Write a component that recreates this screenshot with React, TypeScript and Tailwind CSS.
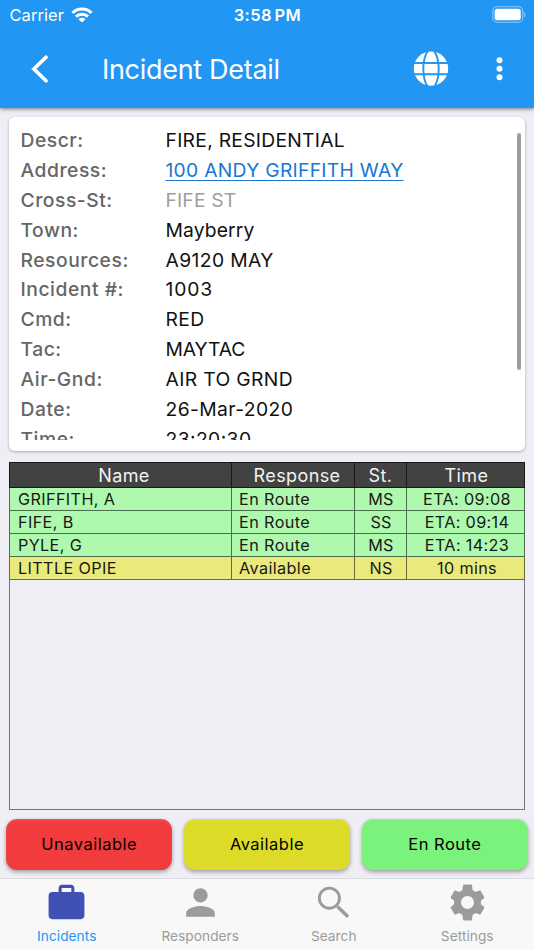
import React from "react";

type Detail = { label: string; value: string; spacing: string; tone?: string };

const details: Detail[] = [
  { label: "Descr:", value: "FIRE, RESIDENTIAL", spacing: "tracking-[0.27px]" },
  { label: "Address:", value: "100 ANDY GRIFFITH WAY", spacing: "tracking-[0.28px]", tone: "link" },
  { label: "Cross-St:", value: "FIFE ST", spacing: "tracking-[0.15px]", tone: "muted" },
  { label: "Town:", value: "Mayberry", spacing: "tracking-[0.12px]" },
  { label: "Resources:", value: "A9120 MAY", spacing: "tracking-[0.38px]" },
  { label: "Incident #:", value: "1003", spacing: "tracking-[0.85px]" },
  { label: "Cmd:", value: "RED", spacing: "tracking-[0.4px]" },
  { label: "Tac:", value: "MAYTAC", spacing: "tracking-[-0.1px]" },
  { label: "Air-Gnd:", value: "AIR TO GRND", spacing: "tracking-[0.35px]" },
  { label: "Date:", value: "26-Mar-2020", spacing: "tracking-[0.4px]" },
  { label: "Time:", value: "23:20:30", spacing: "tracking-[0.4px]" },
];

const rows = [
  ["GRIFFITH, A", "En Route", "MS", "ETA: 09:08"],
  ["FIFE, B", "En Route", "SS", "ETA: 09:14"],
  ["PYLE, G", "En Route", "MS", "ETA: 14:23"],
  ["LITTLE OPIE", "Available", "NS", "10 mins"],
];

const tabs = [
  {
    label: "Incidents",
    icon: (
      <path d="M20 6.2h-3.6V3.9c0-1-.8-1.8-1.8-1.8H9.4c-1 0-1.8.8-1.8 1.8v2.3H4c-1.11 0-2 .89-2 2v11.1c0 1.11.89 2 2 2h16c1.11 0 2-.89 2-2V8.2c0-1.11-.89-2-2-2zm-5.3 0H9.3V3.9h5.4v2.3z" />
    ),
  },
  {
    label: "Responders",
    icon: (
      <path d="M12 12c2.21 0 4-1.79 4-4s-1.79-4-4-4-4 1.79-4 4 1.79 4 4 4zm0 2c-2.67 0-8 1.34-8 4v2h16v-2c0-2.66-5.33-4-8-4z" />
    ),
  },
  {
    label: "Search",
    icon: (
      <g fill="none" stroke="#9b9b9b">
        <circle cx="9.7" cy="9.6" r="5.6" strokeWidth="1.6" />
        <path d="m14.2 14.2 5.9 5.8" strokeWidth="1.9" />
      </g>
    ),
  },
  {
    label: "Settings",
    icon: (
      <path d="M19.43 12.98c.04-.32.07-.64.07-.98s-.03-.66-.07-.98l1.8-1.45c.19-.15.24-.42.12-.64l-1.95-3.4c-.12-.22-.39-.3-.61-.22l-2.22.85c-.52-.4-1.08-.73-1.69-.98l-.38-2.76C14.46 2.18 14.25 2 14 2h-4c-.25 0-.46.18-.49.42l-.38 2.76c-.61.25-1.17.59-1.69.98l-2.22-.85c-.23-.09-.49 0-.61.22l-1.95 3.4c-.13.22-.07.49.12.64l1.8 1.45c-.04.32-.07.65-.07.98s.03.66.07.98l-1.8 1.45c-.19.15-.24.42-.12.64l1.95 3.4c.12.22.39.3.61.22l2.22-.85c.52.4 1.08.73 1.69.98l.38 2.76c.03.24.24.42.49.42h4c.25 0 .46-.18.49-.42l.38-2.76c.61-.25 1.17-.59 1.69-.98l2.22.85c.23.09.49 0 .61-.22l1.95-3.4c.12-.22.07-.49-.12-.64l-1.8-1.45zM12 15.6c-2 0-3.6-1.6-3.6-3.6s1.6-3.6 3.6-3.6 3.6 1.6 3.6 3.6-1.6 3.6-3.6 3.6z" />
    ),
  },
];

function StatusBar() {
  return (
    <div className="grid h-[30px] grid-cols-3 items-center pl-[9.5px] pr-[8px] text-[16.5px] leading-[30px]">
      <div className="flex items-center gap-[7px]">
        <span className="tracking-[0.05px]">Carrier</span>
        <svg width="22" height="16" viewBox="0 0 22 16" fill="none" stroke="currentColor" strokeWidth="3.1">
          <path d="M1.5 6a13.4 13.4 0 0 1 19 0" />
          <path d="M5 9.7a8.5 8.5 0 0 1 12 0" />
          <path d="M11 15.6 7.5 12.3a4.9 4.9 0 0 1 7 0Z" fill="currentColor" stroke="none" />
        </svg>
      </div>
      <span className="whitespace-nowrap pr-[0.5px] text-center font-semibold tracking-[0.4px] [word-spacing:-2px]">3:58 PM</span>
      <div className="flex justify-end pb-[1px]">
        <svg width="34" height="17" viewBox="0 0 34 17">
          <rect x="0.8" y="0.8" width="30" height="15.4" rx="4.4" fill="none" stroke="#fff" strokeOpacity=".5" strokeWidth="1.1" />
          <rect x="2.6" y="2.8" width="26.2" height="11.4" rx="2.6" fill="#fff" />
          <path d="M32.2 5.9c1.6.8 1.6 4.6 0 5.4z" fill="#fff" fillOpacity=".5" />
        </svg>
      </div>
    </div>
  );
}

function TitleBar() {
  return (
    <div className="flex h-[78px] items-center pl-[30px] pr-[30px]">
      <svg width="18" height="28" viewBox="0 0 18 28" fill="none" stroke="#fff" strokeWidth="3.7" className="shrink-0">
        <path d="M16 2.2 3.9 14 16 25.8" strokeLinecap="round" />
      </svg>
      <h1 className="ml-[54px] flex-1 whitespace-nowrap pt-[1px] text-[27px] font-normal leading-[34px] tracking-[-0.3px]">Incident Detail</h1>
      <svg width="36" height="36" viewBox="0 0 36 36" className="mr-[47px] shrink-0">
        <circle cx="18" cy="17.6" r="17.2" fill="#fff" />
        <g fill="none" stroke="#2196f3" strokeWidth="1.9">
          <path d="M0 12h36M0 23.3h36" />
          <path d="M14.8 0C8.8 9 8.8 27 14.8 36M21.2 0C27.2 9 27.2 27 21.2 36" />
        </g>
      </svg>
      <svg width="8" height="26" viewBox="0 0 8 26" fill="#fff" className="shrink-0">
        <circle cx="3.5" cy="4.3" r="3" />
        <circle cx="3.5" cy="12.7" r="3" />
        <circle cx="3.5" cy="21.2" r="3" />
      </svg>
    </div>
  );
}

function DetailCard() {
  return (
    <section className="mx-[9px] mt-[9px] flex h-[333.5px] shrink-0 justify-between rounded-[6px] bg-white pb-[11px] pl-[11.5px] pr-[4px] pt-[9px] shadow-[0_1px_3px_rgba(0,0,0,0.3)]">
      <dl className="overflow-hidden text-[19.3px] leading-[29.87px] text-[#111]">
        {details.map((d) => (
          <div key={d.label} className="flex whitespace-nowrap">
            <dt className="w-[145px] font-medium tracking-[0.53px] text-[#666]">{d.label}</dt>
            <dd className={d.spacing}>
              {d.tone === "link" ? (
                <a className="text-[#1976d2] underline decoration-[1px] underline-offset-[3px]">{d.value}</a>
              ) : (
                <span className={d.tone === "muted" ? "text-[#9e9e9e]" : ""}>{d.value}</span>
              )}
            </dd>
          </div>
        ))}
      </dl>
      <div className="mt-[7px] h-[237px] w-[4.5px] rounded-full bg-[#9e9e9e]" />
    </section>
  );
}

function ResponseTable() {
  return (
    <section className="mx-[9px] mt-[11.5px] h-[348px] shrink-0 border border-[#77777b] text-[#181818]">
      <div className="-mx-px -mt-px grid h-[26px] grid-cols-[222px_123px_52px_1fr] divide-x divide-[#191919] border border-[#191919] bg-[#424242] text-center text-[18px] leading-[26px] tracking-[0.4px] text-[#f2f2f2]">
        <span className="h-6 pl-[7px]">Name</span>
        <span className="h-6 pl-[8px]">Response</span>
        <span className="h-6">St.</span>
        <span className="h-6 pl-[2px]">Time</span>
      </div>
      {rows.map((r) => (
        <div
          key={r[0]}
          className={`-mx-px grid h-[22.9px] grid-cols-[222px_123px_52px_1fr] divide-x border-x border-b text-[16.2px] leading-[23px] ${
            r[1] === "Available" ? "divide-[#6b6b3a] border-[#6b6b3a] bg-[#eaea7c]" : "divide-[#4b6e4b] border-[#4b6e4b] bg-[#aef9ae]"
          }`}
        >
          <span className="h-[22px] pl-[8px] tracking-[0.38px]">{r[0]}</span>
          <span className="h-[22px] pl-[7px] tracking-[0.4px]">{r[1]}</span>
          <span className="h-[22px] pl-[1px] text-center tracking-[0.2px]">{r[2]}</span>
          <span className="h-[22px] pl-[3px] text-center tracking-[0.35px]">{r[3]}</span>
        </div>
      ))}
    </section>
  );
}

function Actions() {
  const base =
    "h-[51px] rounded-[11px] text-[16.5px] font-normal tracking-[0.5px] text-black shadow-[0_2px_4px_rgba(0,0,0,0.35),inset_0_2px_3px_rgba(255,255,255,0.1)]";
  return (
    <div className="mx-[6px] mt-[9px] grid shrink-0 grid-cols-3 gap-[11.5px]">
      <button className={`${base} bg-[#f13b3d]`}>Unavailable</button>
      <button className={`${base} bg-[#dcdc28]`}>Available</button>
      <button className={`${base} bg-[#7af27b]`}>En Route</button>
    </div>
  );
}

function TabBar() {
  return (
    <nav className="mt-[8px] grid flex-1 grid-cols-4 border-t border-[#dcdcde] bg-[#f8f8f8]">
      {tabs.map((t, i) => (
        <div key={t.label} className="flex flex-col items-center pt-[2px]">
          <svg width="43" height="43" viewBox="0 0 24 24" className={i === 0 ? "fill-[#3f51b5]" : "fill-[#9b9b9b]"}>
            {t.icon}
          </svg>
          <span className={`mt-[2px] text-[13.7px] leading-[20px] tracking-[0.05px] ${i === 0 ? "text-[#2196f3]" : "text-[#9b9b9b]"}`}>{t.label}</span>
        </div>
      ))}
    </nav>
  );
}

export default function App() {
  return (
    <main className="flex h-[950px] w-[534px] flex-col overflow-hidden bg-[#efeef4] font-[Inter,'Liberation_Sans',sans-serif]">
      <header className="h-[108px] shrink-0 bg-[#2196f3] text-white shadow-[0_1px_4px_rgba(0,0,0,0.5)]">
        <StatusBar />
        <TitleBar />
      </header>
      <DetailCard />
      <ResponseTable />
      <Actions />
      <TabBar />
    </main>
  );
}
